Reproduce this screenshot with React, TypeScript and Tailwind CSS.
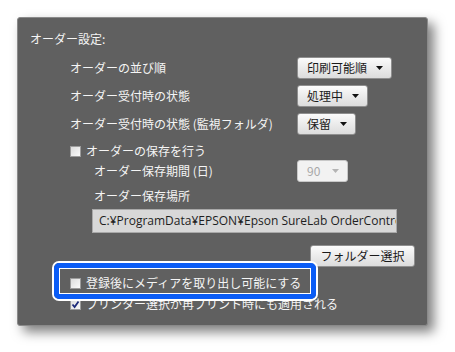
const font = { fontFamily: '"Noto Sans CJK JP", "Noto Sans", sans-serif' };

function Arrow({ disabled = false }: { disabled?: boolean }) {
  return (
    <svg width="7" height="4" viewBox="0 0 7 4" className="shrink-0">
      <path d="M0 0 L7 0 L3.5 4 Z" fill={disabled ? "#b4b4b4" : "#111"} />
    </svg>
  );
}

function Dropdown({ label, width, disabled = false }: { label: string; width: string; disabled?: boolean }) {
  return (
    <div
      className={`${width} h-[22px] flex items-center justify-between pl-[9px] pr-[8px] rounded-[3px] border text-[12px] leading-none ${
        disabled
          ? "border-[#c8c8c8] bg-[#f2f2f2] text-[#a8a8a8]"
          : "border-[#8f8f8f] bg-gradient-to-b from-[#fbfbfb] to-[#dcdcdc] text-[#1a1a1a]"
      }`}
    >
      <span>{label}</span>
      <Arrow disabled={disabled} />
    </div>
  );
}

function Check({ checked = false }: { checked?: boolean }) {
  return (
    <div className="w-[11px] h-[11px] shrink-0 border border-[#9c9c9c] bg-gradient-to-br from-[#dcdcdc] to-[#fafafa] flex items-center justify-center">
      {checked && (
        <svg width="9" height="9" viewBox="0 0 9 9">
          <path d="M1.5 4.5 L3.6 7 L7.5 1.5" stroke="#1c2a7a" strokeWidth="1.8" fill="none" />
        </svg>
      )}
    </div>
  );
}

export default function App() {
  return (
    <div className="w-[455px] h-[352px] bg-white pt-[17px] pl-[17px]" style={font}>
      <div className="relative w-[411px] h-[309px] rounded-[3px] border border-[#8a8a8a] bg-[#606060] shadow-[6px_6px_12px_rgba(0,0,0,0.5)] pl-[12px] pr-[12px] text-[12px] text-[#f5f5f5]">
        <div className="mt-[13px] h-[16px] flex items-center">オーダー設定:</div>

        <div className="pl-[40px]">
          <div className="mt-[10px] flex flex-col gap-[6px]">
            <div className="h-[22px] flex items-center">
              <span className="w-[227px]">オーダーの並び順</span>
              <Dropdown label="印刷可能順" width="w-[95px]" />
            </div>
            <div className="h-[22px] flex items-center">
              <span className="w-[227px]">オーダー受付時の状態</span>
              <Dropdown label="処理中" width="w-[71px]" />
            </div>
            <div className="h-[22px] flex items-center">
              <span className="w-[227px]">オーダー受付時の状態 (監視フォルダ)</span>
              <Dropdown label="保留" width="w-[59px]" />
            </div>
          </div>

          <div className="mt-[8px] h-[16px] flex items-center gap-[5px]">
            <Check />
            <span>オーダーの保存を行う</span>
          </div>

          <div className="pl-[24px]">
            <div className="mt-[1px] h-[22px] flex items-center">
              <span className="w-[203px]">オーダー保存期間 (日)</span>
              <Dropdown label="90" width="w-[51px]" disabled />
            </div>
            <div className="mt-[6px] h-[16px] flex items-center">オーダー保存場所</div>
          </div>

          <div
            className="ml-[22px] mt-[5px] w-[305px] h-[24px] border border-[#a9a9a9] bg-[#d8d8d8] flex items-center pl-[6px] overflow-hidden whitespace-nowrap text-[12px] text-[#1e1e1e]"
            style={{ fontFamily: '"Open Sans", "Noto Sans CJK JP", sans-serif' }}
          >
            C:¥ProgramData¥EPSON¥Epson SureLab OrderController
          </div>
        </div>

        <div className="mt-[12px] flex justify-end">
          <div className="w-[105px] h-[22px] rounded-[3px] border border-[#8f8f8f] bg-gradient-to-b from-[#fbfbfb] to-[#dcdcdc] text-[#1a1a1a] flex items-center justify-center">
            フォルダー選択
          </div>
        </div>

        <div className="pl-[40px]">
          <div className="mt-[8px] h-[16px] flex items-center gap-[5px]">
            <Check />
            <span>登録後にメディアを取り出し可能にする</span>
          </div>
          <div className="mt-[5px] h-[16px] flex items-center gap-[5px]">
            <Check checked />
            <span>プリンター選択が再プリント時にも適用される</span>
          </div>
        </div>

        {/* highlight callout */}
        <div className="absolute left-[34px] top-[243px] w-[266px] h-[40px] rounded-[7px] border-[2px] border-white">
          <div className="w-full h-full rounded-[5px] border-[5px] border-[#0a5cf5]">
            <div className="w-full h-full border border-white" />
          </div>
        </div>
      </div>
    </div>
  );
}
